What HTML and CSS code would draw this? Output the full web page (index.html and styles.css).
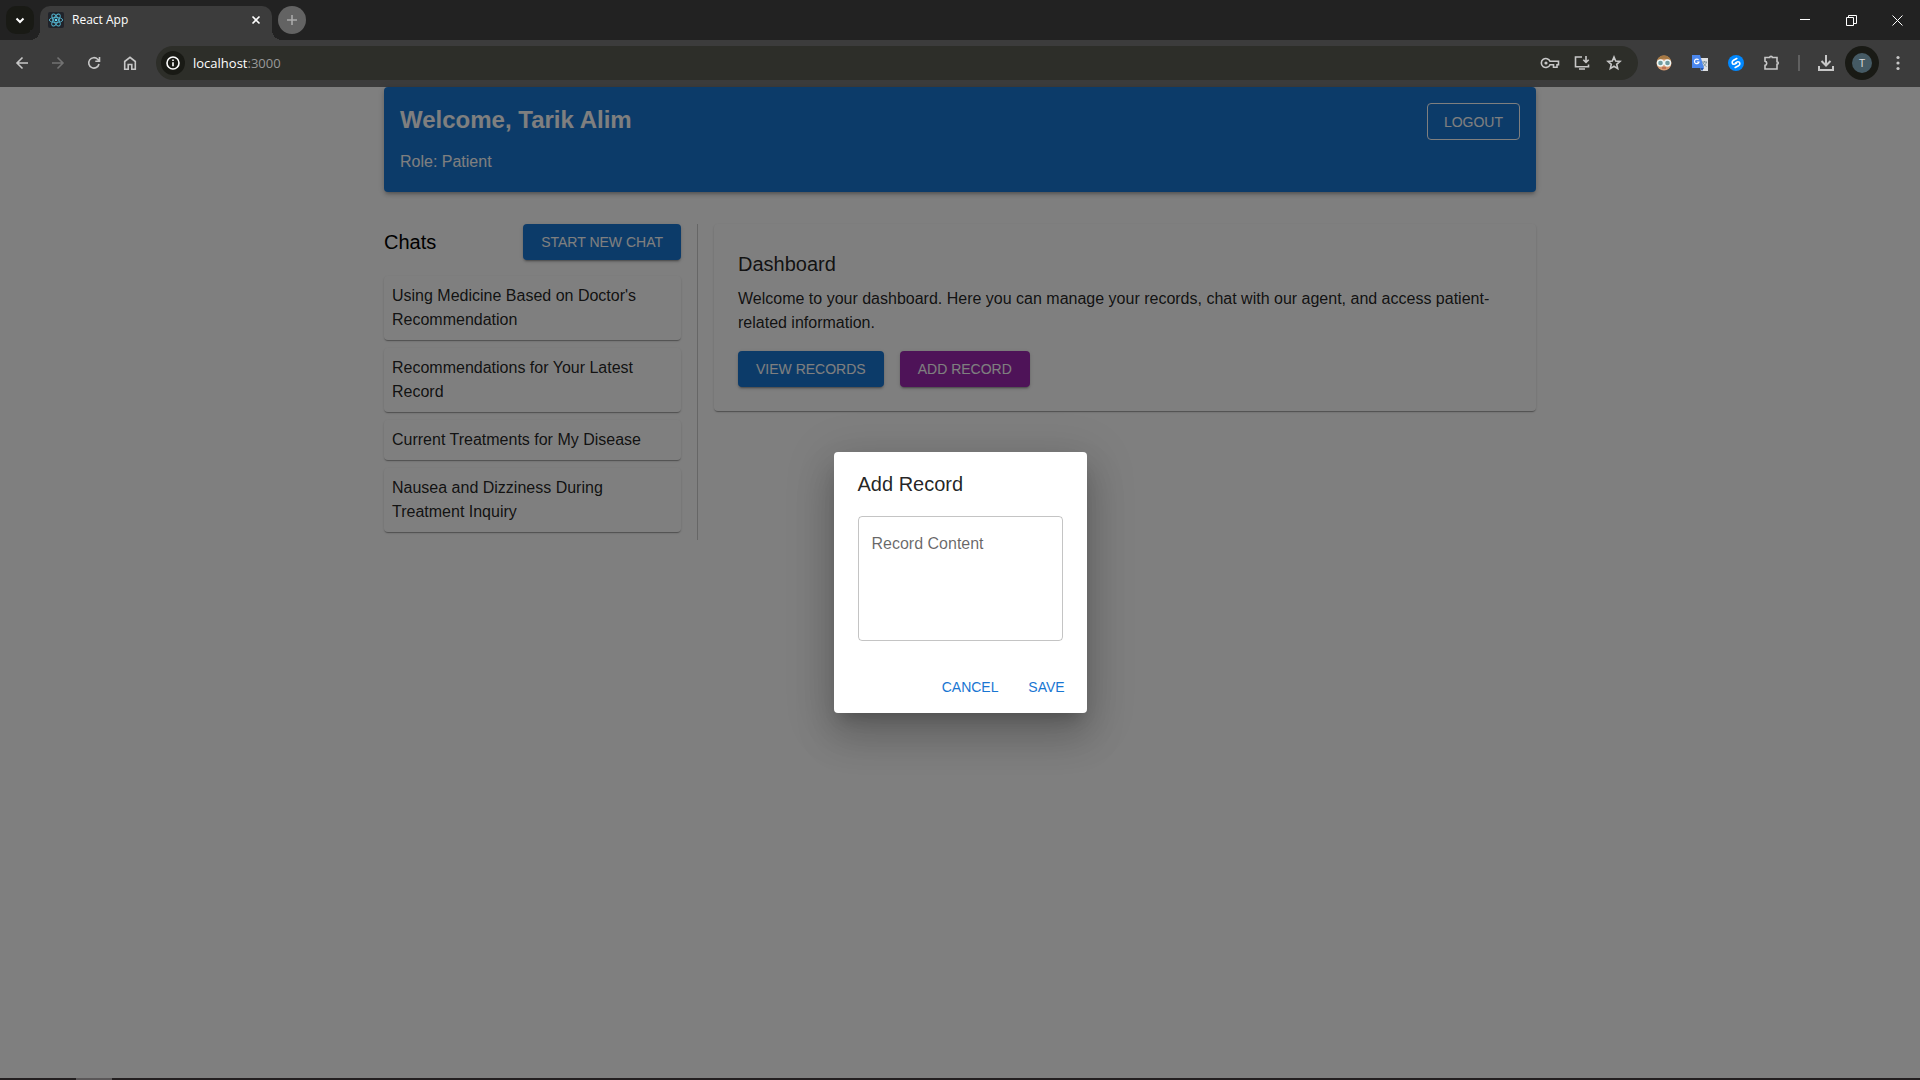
FILE: index.html
```html
<!doctype html>
<html lang="en">
    <head>
        <meta charset="utf-8">
        <title>React App</title>
        <link rel="stylesheet" href="styles.css">
    </head>
    <body>
        <div class="browser">
            <div class="tabs">
                <button class="tab-search" aria-label="Search tabs">
                    <svg width="12" height="12" viewBox="0 0 12 12"><path d="M2.500 4.500 6 8l3.500-3.500" class="line bold" /></svg>
                </button>
                <div class="tab">
                    <svg class="favicon" width="16" height="16" viewBox="0 0 16 16">
                        <rect width="16" height="16" rx="2" fill="#20232a" />
                        <g fill="none" stroke="#53b4cf" stroke-width=".9">
                            <ellipse cx="8" cy="8" rx="6.700" ry="2.600" />
                            <ellipse cx="8" cy="8" rx="6.700" ry="2.600" transform="rotate(60 8 8)" />
                            <ellipse cx="8" cy="8" rx="6.700" ry="2.600" transform="rotate(120 8 8)" />
                        </g>
                        <circle cx="8" cy="8" r="1.300" fill="#61dafb" />
                    </svg>
                    <span class="tab-title">React App</span>
                    <button class="tab-close" aria-label="Close tab">
                        <svg width="10" height="10" viewBox="0 0 10 10"><path d="m1.500 1.500 7 7m0-7-7 7" class="line" /></svg>
                    </button>
                </div>
                <button class="new-tab" aria-label="New tab">
                    <svg width="12" height="12" viewBox="0 0 12 12"><path d="M6 1v10M1 6h10" class="line" /></svg>
                </button>
                <div class="window-buttons">
                    <button aria-label="Minimize"><svg width="10" height="10" viewBox="0 0 10 10"><path d="M0 4.500h10" class="line thin" /></svg></button>
                    <button aria-label="Restore"><svg width="11" height="11" viewBox="0 0 11 11"><path d="M.5 2.500h7v8h-7zM2.500 2.500v-2h8v8h-3" class="line thin" /></svg></button>
                    <button aria-label="Close"><svg width="11" height="11" viewBox="0 0 11 11"><path d="m.5.5 10 10m0-10-10 10" class="line thin" /></svg></button>
                </div>
            </div>

            <div class="toolbar">
                <div class="nav">
                    <button aria-label="Back"><svg width="16" height="16" viewBox="0 0 16 16"><path d="M14 8H3m5.500-5.500L3 8l5.500 5.500" class="line" /></svg></button>
                    <button aria-label="Forward" disabled><svg width="16" height="16" viewBox="0 0 16 16"><path d="M2 8h11M7.500 2.500 13 8l-5.500 5.500" class="line" /></svg></button>
                    <button aria-label="Reload"><svg width="16" height="16" viewBox="0 0 16 16"><path d="M13 9a5.200 5.200 0 1 1-1.300-4.700L13.300 6M13.500 2v4.200H9.300" class="line" /></svg></button>
                    <button aria-label="Home"><svg width="16" height="16" viewBox="0 0 16 16"><path d="M2.700 6.500 8 2.300l5.300 4.200v7.700H9.800V9.500H6.200v4.700H2.700z" class="line" /></svg></button>
                </div>
                <div class="address">
                    <button class="site-info" aria-label="Site information">
                        <svg width="16" height="16" viewBox="0 0 16 16"><circle cx="8" cy="8" r="6" class="line" /><path d="M8 7.300v4M8 4.500v1.500" class="line" /></svg>
                    </button>
                    <a class="url" href="#">localhost<span>:3000</span></a>
                    <div class="address-icons">
                        <button aria-label="Passwords"><svg width="20" height="16" viewBox="0 0 20 16"><path d="M10 6.300a4.500 4.500 0 1 0 0 3.400h3.500v2.500H17V9.700h1.500V6.300z" class="line" /><circle cx="6" cy="8" r="1.600" fill="currentColor" /></svg></button>
                        <button aria-label="Install app"><svg width="18" height="16" viewBox="0 0 18 16"><path d="M9 2H2.500v9.800h13V9.500M6 14h6M13 1v6M10.300 4.700 13 7.400l2.700-2.700" class="line" /></svg></button>
                        <button aria-label="Bookmark"><svg width="16" height="16" viewBox="0 0 16 16"><path d="m8 2 1.700 4 4.300.4-3.300 2.900 1 4.300L8 11.300l-3.700 2.300 1-4.300L2 6.400 6.300 6z" class="line" /></svg></button>
                    </div>
                </div>
                <div class="extensions">
                    <button aria-label="Reader extension">
                        <svg width="16" height="16" viewBox="0 0 16 16">
                            <circle cx="8" cy="8" r="7.500" fill="#d69a70" />
                            <path d="M1 6a7.200 7.200 0 0 1 14 0C10 3 6 3 1 6z" fill="#a57843" />
                            <circle cx="4.500" cy="8" r="3" fill="#719ca0" stroke="#eef7f7" stroke-width="1.400" />
                            <circle cx="11.500" cy="8" r="3" fill="#719ca0" stroke="#eef7f7" stroke-width="1.400" />
                            <path d="M6 13h4" stroke="#a64c3d" />
                        </svg>
                    </button>
                    <button aria-label="Translate">
                        <svg width="16" height="16" viewBox="0 0 16 16">
                            <path d="M6 3h10v13H9z" fill="#dfe1e3" />
                            <path d="M10 7h5m-2.500-1v1m2 0c-.5 2-2 3.500-3.500 4.500m0-4c1 2 2 3 3.500 4" fill="none" stroke="#78909c" />
                            <path d="M0 0h8l4 13H0z" fill="#4b87ed" />
                            <path d="M8 13h4l-2 3z" fill="#2356b0" />
                            <path d="M6.600 5A2.300 2.300 0 1 0 7 7H4.800" fill="none" stroke="#fff" stroke-width="1.200" />
                        </svg>
                    </button>
                    <button aria-label="Shazam">
                        <svg width="16" height="16" viewBox="0 0 16 16">
                            <circle cx="8" cy="8" r="8" fill="#0088ff" />
                            <path d="M8.800 3.500 5.500 5.300C3.300 6.500 4 9.300 6 9.300c1 0 1.500-.5 2.500-1.200M7.200 12.500l3.300-1.800C12.700 9.500 12 6.700 10 6.700c-1 0-1.500.5-2.500 1.200" fill="none" stroke="#fff" stroke-width="1.600" stroke-linecap="round" />
                        </svg>
                    </button>
                    <button aria-label="Extensions"><svg width="18" height="18" viewBox="0 0 18 18"><path d="M2 3.500h4.700a1.300 1.300 0 0 1 2.600 0H14v4.200a1.300 1.300 0 0 1 0 2.600V15H2v-3.600a2.200 2.200 0 0 0 0-4.300z" class="line" /></svg></button>
                </div>
                <span class="separator"></span>
                <button class="download" aria-label="Downloads"><svg width="18" height="18" viewBox="0 0 18 18"><path d="M9 1v10M4.500 7 9 11.500 13.500 7M2 12v4h14v-4" class="line bold" /></svg></button>
                <button class="profile" aria-label="Profile"><span>T</span></button>
                <button class="more" aria-label="Menu"><svg width="4" height="16" viewBox="0 0 4 16" fill="currentColor"><circle cx="2" cy="2.500" r="1.600" /><circle cx="2" cy="8" r="1.600" /><circle cx="2" cy="13.500" r="1.600" /></svg></button>
            </div>
        </div>

        <div class="page">
            <div class="container">
                <header class="header">
                    <div class="header-row">
                        <h1>Welcome, Tarik Alim</h1>
                        <button class="btn outlined">LOGOUT</button>
                    </div>
                    <p>Role: Patient</p>
                </header>

                <div class="content">
                    <aside class="chats">
                        <div class="chats-head">
                            <h2>Chats</h2>
                            <button class="btn primary">START NEW CHAT</button>
                        </div>
                        <ul>
                            <li><a href="#">Using Medicine Based on Doctor's Recommendation</a></li>
                            <li><a href="#">Recommendations for Your Latest Record</a></li>
                            <li><a href="#">Current Treatments for My Disease</a></li>
                            <li><a href="#">Nausea and Dizziness During Treatment Inquiry</a></li>
                        </ul>
                    </aside>

                    <main class="dashboard">
                        <h2>Dashboard</h2>
                        <p>Welcome to your dashboard. Here you can manage your records, chat with our agent, and access patient-related information.</p>
                        <div class="actions">
                            <button class="btn primary">VIEW RECORDS</button>
                            <button class="btn secondary">ADD RECORD</button>
                        </div>
                    </main>
                </div>
            </div>

            <div class="backdrop">
                <form class="dialog" role="dialog" aria-labelledby="dialog-title">
                    <h2 id="dialog-title">Add Record</h2>
                    <div class="field">
                        <label for="record">Record Content</label>
                        <textarea id="record"></textarea>
                    </div>
                    <div class="dialog-actions">
                        <button type="button" class="btn text">CANCEL</button>
                        <button type="button" class="btn text">SAVE</button>
                    </div>
                </form>
            </div>
        </div>

        <footer class="taskbar"><span></span></footer>
    </body>
</html>
```

FILE: styles.css
```css
* {
    box-sizing: border-box;
}

body {
    display: flex;
    flex-direction: column;
    height: 100vh;
    margin: 0;
    overflow: hidden;
    color: rgba(0, 0, 0, 0.87);
    font: 16px/24px "Liberation Sans", Arial, sans-serif;
}

h1,
h2,
p,
ul {
    margin: 0;
    padding: 0;
}

h2 {
    font-size: 20px;
    font-weight: 400;
    line-height: 32px;
}

button {
    font-family: inherit;
    border: 0;
    padding: 0;
    background: none;
    color: inherit;
}

svg {
    display: block;
}

.line {
    fill: none;
    stroke: currentColor;
    stroke-width: 1.6px;
}

.line.bold {
    stroke-width: 2px;
}

.line.thin {
    stroke-width: 1px;
}

/* browser */
.browser {
    flex: none;
    background: #3c3c3c;
    color: #c7c7c7;
    font-family: "Open Sans", "Noto Sans", sans-serif;

    button {
        display: grid;
        place-items: center;
        flex: none;
    }
}

.tabs {
    display: flex;
    align-items: center;
    height: 40px;
    padding-left: 6px;
    background: #222;
    color: #fff;
}

.tab-search {
    width: 28px;
    height: 28px;
    border-radius: 10px;
    background: #191a15;
}

.tab {
    display: flex;
    align-items: center;
    align-self: flex-end;
    width: 232px;
    height: 34px;
    margin-left: 6px;
    padding: 0 10px 6px 8px;
    border-radius: 10px 10px 0 0;
    background: #3c3c3c;
    position: relative;

    &::before,
    &::after {
        content: "";
        position: absolute;
        bottom: 0;
        width: 10px;
        height: 10px;
    }

    &::before {
        right: 100%;
        background: radial-gradient(circle at 0 0, #222 10px, #3c3c3c 10px);
    }

    &::after {
        left: 100%;
        background: radial-gradient(circle at 100% 0, #222 10px, #3c3c3c 10px);
    }
}

.tab-title {
    flex: 1;
    margin-left: 8px;
    font-size: 12px;
}

.tab-close {
    width: 12px;
    height: 16px;
}

.new-tab {
    width: 28px;
    height: 28px;
    margin-left: 6px;
    border-radius: 50%;
    background: #636363;
    color: #aaa;
}

.window-buttons {
    display: flex;
    margin-left: auto;

    button {
        width: 46px;
        height: 40px;
    }
}

.toolbar {
    display: flex;
    align-items: center;
    height: 47px;
    padding: 0 7px 1px 6px;
}

.nav {
    display: flex;
    gap: 4px;

    button {
        width: 32px;
        height: 32px;
    }

    button:disabled {
        color: #727272;
    }
}

.address {
    display: flex;
    flex: 1;
    align-items: center;
    height: 34px;
    margin-left: 10px;
    padding: 0 8px 0 5px;
    border-radius: 17px;
    background: #2d2e29;
}

.site-info {
    width: 24px;
    height: 24px;
    border-radius: 50%;
    background: #191a15;
    color: #fff;
}

.url {
    flex: 1;
    margin-left: 8px;
    color: #fff;
    font-size: 13px;
    text-decoration: none;

    span {
        color: #999;
    }
}

.address-icons {
    display: flex;

    button {
        width: 32px;
        height: 32px;
    }
}

.extensions {
    display: flex;
    gap: 4px;
    margin-left: 10px;

    button {
        width: 32px;
        height: 32px;
    }
}

.separator {
    width: 2px;
    height: 16px;
    margin: 0 7px 0 10px;
    background: #606060;
}

.download {
    width: 38px;
    height: 32px;
}

.profile {
    width: 34px;
    height: 34px;
    border-radius: 50%;
    background: #191a15;

    span {
        width: 20px;
        border-radius: 50%;
        background: #455a64;
        color: #ddd;
        font-size: 11px;
        line-height: 20px;
    }
}

.more {
    width: 30px;
    height: 32px;
    margin-left: 4px;
}

/* page */
.page {
    flex: 1;
    min-height: 0;
    background: #fff;
    position: relative;
}

.container {
    max-width: 1200px;
    margin: 0 auto;
    padding: 0 24px;
}

.btn {
    min-width: 64px;
    height: 36px;
    padding: 0 18px;
    border-radius: 4px;
    font-size: 14px;
    line-height: 24px;
    cursor: pointer;
}

.btn.primary,
.btn.secondary {
    background: #1976d2;
    color: #fff;
    box-shadow:
        0 3px 1px -2px rgba(0, 0, 0, 0.2),
        0 2px 2px 0 rgba(0, 0, 0, 0.14),
        0 1px 5px 0 rgba(0, 0, 0, 0.12);
}

.btn.secondary {
    background: #9c27b0;
}

.btn.outlined {
    height: 37px;
    padding: 0 16px;
    border: 1px solid #fff;
}

.btn.text {
    padding: 0 8px;
    color: #1976d2;
}

.header {
    padding: 16px;
    border-radius: 4px;
    background: #1976d2;
    color: #fff;
    box-shadow:
        0 3px 3px -2px rgba(0, 0, 0, 0.2),
        0 3px 4px 0 rgba(0, 0, 0, 0.14),
        0 1px 8px 0 rgba(0, 0, 0, 0.12);

    h1 {
        font-size: 24px;
        line-height: 34px;
    }

    p {
        margin-top: 8px;
        line-height: 28px;
    }
}

.header-row {
    display: flex;
    align-items: flex-start;
    justify-content: space-between;
}

.content {
    display: flex;
    align-items: flex-start;
    gap: 16px;
    margin-top: 32px;
}

.chats {
    flex: none;
    width: 314px;
    padding-right: 16px;
    border-right: 1px solid #ccc;

    h2 {
        color: #000;
    }

    ul {
        margin-top: 16px;
        list-style: none;
    }

    li {
        padding-bottom: 8px;
    }

    a {
        display: block;
        padding: 8px;
        border-radius: 4px;
        color: inherit;
        text-decoration: none;
    }
}

.chats-head {
    display: flex;
    align-items: center;
    justify-content: space-between;
}

.chats a,
.dashboard {
    background: #fff;
    box-shadow:
        0 2px 1px -1px rgba(0, 0, 0, 0.2),
        0 1px 1px 0 rgba(0, 0, 0, 0.14),
        0 1px 3px 0 rgba(0, 0, 0, 0.12);
}

.dashboard {
    flex: 1;
    padding: 24px;
    border-radius: 4px;

    p {
        margin: 7px 0 16px;
    }
}

.actions {
    display: flex;
    gap: 16px;
}

/* dialog */
.backdrop {
    display: grid;
    place-items: center;
    position: absolute;
    inset: 0;
    background: rgba(0, 0, 0, 0.5);
}

.dialog {
    border-radius: 4px;
    background: #fff;
    box-shadow:
        0 11px 15px -7px rgba(0, 0, 0, 0.2),
        0 24px 38px 3px rgba(0, 0, 0, 0.14),
        0 9px 46px 8px rgba(0, 0, 0, 0.12);

    h2 {
        padding: 16px 24px;
    }
}

.field {
    padding: 0 24px 20px;
    position: relative;

    label {
        position: absolute;
        top: 16px;
        left: 38px;
        color: rgba(0, 0, 0, 0.6);
    }

    textarea {
        display: block;
        width: 205px;
        height: 125px;
        padding: 16px 14px;
        border: 1px solid rgba(0, 0, 0, 0.23);
        border-radius: 4px;
        background: none;
        font: inherit;
        resize: none;
    }
}

.dialog-actions {
    display: flex;
    justify-content: flex-end;
    gap: 8px;
    padding: 8px;
}

.taskbar {
    flex: none;
    height: 2px;
    padding-left: 76px;
    background: #231f20;

    span {
        display: block;
        width: 36px;
        height: 2px;
        background: #5a5758;
    }
}
```
